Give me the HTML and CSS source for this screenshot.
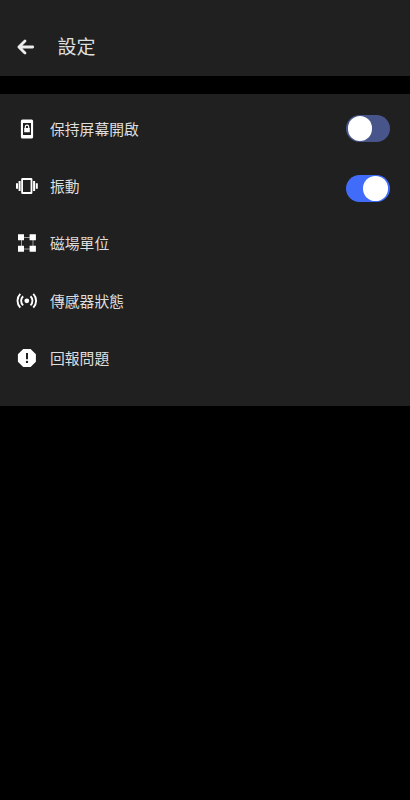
FILE: index.html
```html
<!DOCTYPE html>
<html lang="zh-Hant">
<head>
<meta charset="utf-8">
<title>設定</title>
<link rel="stylesheet" href="styles.css">
</head>
<body>
<header class="header">
  <svg class="back" viewBox="0 0 20 20"><path d="M16.700 10H3M9 3.900L2.900 10l6.100 6.100"/></svg>
  <h1 class="title">設定</h1>
</header>
<main class="panel">
  <div class="row">
    <svg class="icon" viewBox="0 0 24 24"><path fill-rule="evenodd" d="M7.400 2.400h9.200a1.500 1.500 0 0 1 1.500 1.500v16a1.500 1.500 0 0 1-1.500 1.500H7.400a1.500 1.500 0 0 1-1.500-1.500V3.900a1.500 1.500 0 0 1 1.500-1.500zM8 6v12h8V6z"/><path fill-rule="evenodd" d="M9.200 11h.5V9.900a2.300 2.300 0 0 1 4.600 0V11h.5v4.200H9.200zM10.900 11h2.200V9.900a1.100 1.100 0 0 0-2.200 0z"/></svg>
    <span class="label">保持屏幕開啟</span>
    <span class="switch"></span>
  </div>
  <div class="row">
    <svg class="icon" viewBox="0 0 24 24"><path fill-rule="evenodd" d="M7.500 4h8.600A1.300 1.300 0 0 1 17.400 5.300v13.400a1.300 1.300 0 0 1-1.300 1.300H7.500a1.300 1.300 0 0 1-1.300-1.300V5.300A1.300 1.300 0 0 1 7.500 4zM8 6v12h7.600V6z"/><path d="M3.600 7h2v10h-2zM18.100 7h2v10h-2zM1 9.200h2v5.600H1zM20.800 9.200h2v5.600h-2z"/></svg>
    <span class="label">振動</span>
    <span class="switch on"></span>
  </div>
  <div class="row">
    <svg class="icon" viewBox="0 0 24 24"><path class="link" d="M6.500 6.500h11.500v11.500H6.500z"/><path d="M3 3.200h6v6H3zM14.600 3.200h6.300v6h-6.300zM3 14.800h6v6H3zM14.600 14.800h6.300v6h-6.300z"/></svg>
    <span class="label">磁場單位</span>
  </div>
  <div class="row">
    <svg class="icon" viewBox="0 0 24 24"><circle cx="11.800" cy="11.800" r="2.400"/><path class="wave" d="M5.300 4.900a9.900 9.900 0 0 0 0 13.800M18.300 4.900a9.900 9.900 0 0 1 0 13.800M8.100 7.200a6.400 6.400 0 0 0 0 9.200M15.500 7.200a6.400 6.400 0 0 1 0 9.200"/></svg>
    <span class="label">傳感器狀態</span>
  </div>
  <div class="row">
    <svg class="icon" viewBox="0 0 24 24"><path fill-rule="evenodd" d="M8.200 3h7.400L20.900 8.300v7.400L15.600 21H8.200L2.900 15.700V8.300zM11 7v6.300h2V7zM12 14.700a1.200 1.200 0 1 0 0 2.400 1.200 1.200 0 0 0 0-2.400z"/></svg>
    <span class="label">回報問題</span>
  </div>
</main>
</body>
</html>
```
FILE: styles.css
```css
* {
  box-sizing: border-box;
}

body {
  margin: 0;
  min-height: 100vh;
  background: #000;
  color: #dedede;
  font-family: "Noto Sans CJK TC", sans-serif;
}

.header {
  display: flex;
  align-items: center;
  gap: 21.5px;
  height: 75.5px;
  padding: 18px 16px 0;
  background: #202020;
}

.back {
  width: 20px;
  height: 20px;
  fill: none;
  stroke: #ececec;
  stroke-width: 2.8;
  stroke-linecap: round;
  stroke-linejoin: round;
}

.title {
  margin: 0 0 2px;
  font-size: 19px;
  font-weight: 400;
  line-height: 28px;
}

.panel {
  height: 312px;
  margin-top: 18px;
  padding: 6.5px 20px 0 15px;
  background: #202020;
}

.row {
  display: flex;
  align-items: center;
  height: 57.4px;
}

.icon {
  flex: none;
  width: 24px;
  height: 24px;
  margin-right: 11px;
  fill: #fff;
}

.link {
  fill: none;
  stroke: #999;
  stroke-width: 1;
}

.wave {
  fill: none;
  stroke: #fff;
  stroke-width: 1.9;
}

.label {
  flex: 1;
  font-size: 14.8px;
  line-height: 22px;
}

.switch {
  width: 44px;
  height: 27px;
  padding: 1.2px 1.8px;
  border-radius: 14px;
  background: #47558a;
}

.switch::before {
  content: "";
  display: block;
  width: 24.6px;
  height: 24.6px;
  border-radius: 50%;
  background: #fff;
}

.switch.on {
  margin-top: 4.5px;
  padding-right: 2.5px;
  background: #416cfa;
}

.switch.on::before {
  margin-left: auto;
}
```
